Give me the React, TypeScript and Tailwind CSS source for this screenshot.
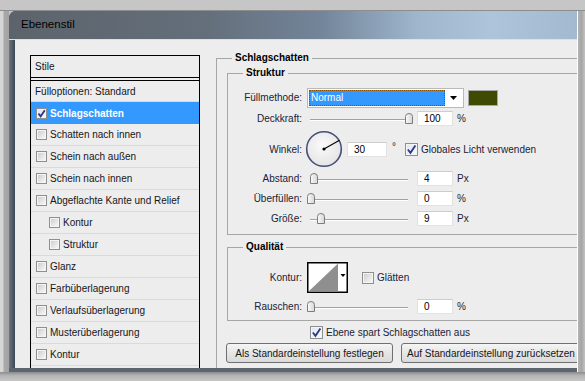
import React from "react";

type BoxProps = { checked?: boolean; size?: number };

function CheckBox({ checked = false, size = 11 }: BoxProps) {
  const s = size;
  return (
    <svg width={s} height={s} viewBox={`0 0 ${s} ${s}`} className="shrink-0">
      <defs>
        <linearGradient id="cbOff" x1="0" y1="0" x2="1" y2="1">
          <stop offset="0" stopColor="#cfcfcf" />
          <stop offset="1" stopColor="#f6f6f6" />
        </linearGradient>
        <linearGradient id="cbOn" x1="0" y1="0" x2="1" y2="1">
          <stop offset="0" stopColor="#dfe6f5" />
          <stop offset="1" stopColor="#f8f9fd" />
        </linearGradient>
      </defs>
      <rect x={0.5} y={0.5} width={s - 1} height={s - 1} fill="#f4f4f4" stroke="#8e8f8f" />
      <rect x={2} y={2} width={s - 4} height={s - 4} fill={checked ? "url(#cbOn)" : "url(#cbOff)"} />
      {checked && (
        <path
          d={`M${s * 0.22} ${s * 0.5} L${s * 0.42} ${s * 0.76} L${s * 0.8} ${s * 0.2}`}
          stroke="#2b3a86"
          strokeWidth={1.8}
          fill="none"
        />
      )}
    </svg>
  );
}

function Thumb() {
  return (
    <svg width={8} height={11} viewBox="0 0 8 11">
      <defs>
        <linearGradient id="thumbG" x1="0" y1="0" x2="1" y2="0">
          <stop offset="0" stopColor="#fbfbfb" />
          <stop offset="1" stopColor="#d6d6d6" />
        </linearGradient>
      </defs>
      <path d="M0.5 3.5 Q0.5 0.5 4 0.5 Q7.5 0.5 7.5 3.5 V10.5 H0.5 Z" fill="url(#thumbG)" stroke="#7c7c7c" />
    </svg>
  );
}

// thumb offset in px from the start of the slider box
function Slider({ at }: { at: number }) {
  return (
    <div className="relative h-[16px] w-[105px] shrink-0">
      <div className="absolute left-[3px] top-[9px] h-[2px] w-[98px] border-t border-t-[#a2a2a2] border-b border-b-white" />
      <div className="absolute top-[3px] leading-none" style={{ left: at }}>
        <Thumb />
      </div>
    </div>
  );
}

function NumBox({ value, w = 36 }: { value: string; w?: number }) {
  return (
    <div
      className="flex h-[15px] shrink-0 items-center border border-[#e2e2e2] border-t-[#cdcdcd] bg-white pl-[6px] text-black"
      style={{ width: w }}
    >
      {value}
    </div>
  );
}

function Row({
  label,
  className = "",
  children,
}: {
  label: string;
  className?: string;
  children: React.ReactNode;
}) {
  return (
    <div className={`flex items-center ${className}`}>
      <span className="w-[74px] shrink-0 text-right text-[#1b2236]">{label}</span>
      {children}
    </div>
  );
}

function SliderRow({ label, at, value, unit, className = "" }: { label: string; at: number; value: string; unit: string; className?: string }) {
  return (
    <Row label={label} className={`h-[16px] ${className}`}>
      <div className="ml-[5px] flex items-center">
        <Slider at={at} />
        <div className="ml-[5px]">
          <NumBox value={value} />
        </div>
        <span className="ml-[4px] text-[#1b2236]">{unit}</span>
      </div>
    </Row>
  );
}

const styles: { label: string; indent?: boolean }[] = [
  { label: "Schatten nach innen" },
  { label: "Schein nach außen" },
  { label: "Schein nach innen" },
  { label: "Abgeflachte Kante und Relief" },
  { label: "Kontur", indent: true },
  { label: "Struktur", indent: true },
  { label: "Glanz" },
  { label: "Farbüberlagerung" },
  { label: "Verlaufsüberlagerung" },
  { label: "Musterüberlagerung" },
  { label: "Kontur" },
  { label: "" },
];

export default function App() {
  return (
    <div className="flex h-[381px] w-[585px] flex-col overflow-hidden bg-[#c4c4c4] font-['Liberation_Sans',Arial,sans-serif] text-[10px] text-[#16161a]">
      {/* outer grey frame, top */}
      <div className="h-[11px] shrink-0 border-b border-b-[#8d8d8d] bg-[#c6c6c6]" />

      <div className="flex min-h-0 flex-1">
        <div className="w-[9px] shrink-0 bg-[linear-gradient(90deg,#d6d6d6_0px,#d6d6d6_3px,#a9a9a9_4px,#a3a3a3_9px)]" />

        {/* dialog window */}
        <div className="flex min-w-0 flex-1 flex-col overflow-hidden rounded-tl-[7px] bg-[#3f4953]">
          <div className="flex h-[29px] shrink-0 items-center border-b border-b-[#d5e2ee] bg-[linear-gradient(90deg,#5c636b_0%,#646f7b_35%,#73859a_55%,#9fb6cd_72%,#aec4da_85%,#a3b9cf_100%)] pl-[12px]">
            <span className="text-[11.5px] text-black">Ebenenstil</span>
          </div>

          <div className="flex min-h-0 flex-1">
            <div className="w-[6px] shrink-0 bg-[linear-gradient(90deg,#6d7781,#3c4650)]" />

            <div className="flex min-w-0 flex-1 items-start overflow-hidden bg-[#ededed]">
              {/* styles list */}
              <div className="ml-[15px] mt-[15px] w-[170px] shrink-0 border-x border-t border-black bg-[#ededed]">
                <div className="flex h-[22px] items-center border-b border-black pl-[4px]">Stile</div>
                <div className="h-[2px]" />
                <div className="border-t border-black">
                  <div className="flex h-[21px] items-center border-b border-b-[#dadada] pl-[4px]">
                    Fülloptionen: Standard
                  </div>
                  <div className="flex h-[22px] items-center gap-[3px] bg-[#3399ff] pl-[5px] font-bold text-white">
                    <CheckBox checked />
                    <span>Schlagschatten</span>
                  </div>
                  {styles.map((s, i) => (
                    <div
                      key={i}
                      className={`flex h-[22px] items-center gap-[3px] border-b border-b-[#dadada] ${s.indent ? "pl-[18px]" : "pl-[5px]"}`}
                    >
                      <CheckBox />
                      <span>{s.label}</span>
                    </div>
                  ))}
                </div>
              </div>

              {/* settings */}
              <fieldset className="ml-[16px] mt-[12px] w-[400px] shrink-0 border border-[#a6a6a6] pb-[30px] pl-[10px]">
                <legend className="ml-[5px] px-[3px] text-[10px] font-bold leading-[12px] text-black">Schlagschatten</legend>

                <fieldset className="mt-[3px] w-[370px] border border-[#a6a6a6] pb-[8px]">
                  <legend className="ml-[15px] px-[3px] font-bold leading-[12px] text-black">Struktur</legend>

                  <Row label="Füllmethode:" className="mt-[8px] h-[21px]">
                    <div className="ml-[5px] flex h-[20px] w-[157px] items-stretch border border-[#b9b9b9] bg-white p-[1px]">
                      <div className="flex w-[136px] items-center border border-dotted border-[#8a4d00] bg-[#3399ff] pl-[1px] text-white">
                        Normal
                      </div>
                      <div className="flex flex-1 items-center justify-center">
                        <svg width={7} height={4} viewBox="0 0 7 4">
                          <polygon points="0,0 7,0 3.5,4" fill="#000" />
                        </svg>
                      </div>
                    </div>
                    <div className="ml-[4px] h-[16px] w-[30px] border border-[#a9a9a9] bg-[#3f4a02]" />
                  </Row>

                  <SliderRow label="Deckkraft:" at={98} value="100" unit="%" className="mt-[2px]" />

                  <Row label="Winkel:" className="mt-[4px] h-[38px]">
                    <svg width={38} height={38} viewBox="0 0 38 38" className="ml-[3px] shrink-0">
                      <defs>
                        <radialGradient id="dialG" cx="45%" cy="40%" r="65%">
                          <stop offset="0" stopColor="#fbfbfb" />
                          <stop offset="1" stopColor="#e2e2e2" />
                        </radialGradient>
                      </defs>
                      <circle cx={19} cy={19} r={17.3} fill="url(#dialG)" stroke="#45507a" strokeWidth={1.6} />
                      <line x1={19} y1={19} x2={34.5} y2={10.3} stroke="#000" strokeWidth={1.1} />
                      <circle cx={19} cy={19} r={1.6} fill="#000" />
                    </svg>
                    <div className="ml-[4px]">
                      <NumBox value="30" w={40} />
                    </div>
                    <span className="mb-[6px] ml-[5px] text-[#1b2236]">°</span>
                    <div className="ml-[9px] flex items-center gap-[3px]">
                      <CheckBox checked size={13} />
                      <span className="text-[#1b2236]">Globales Licht verwenden</span>
                    </div>
                  </Row>

                  <SliderRow label="Abstand:" at={3} value="4" unit="Px" className="mt-[2px]" />
                  <SliderRow label="Überfüllen:" at={0} value="0" unit="%" className="mt-[4px]" />
                  <SliderRow label="Größe:" at={10} value="9" unit="Px" className="mt-[4px]" />
                </fieldset>

                <fieldset className="mt-[6px] w-[370px] border border-[#a6a6a6] pb-[6px]">
                  <legend className="ml-[15px] px-[3px] font-bold leading-[12px] text-black">Qualität</legend>

                  <Row label="Kontur:" className="mt-[9px] h-[31px]">
                    <svg width={41} height={31} viewBox="0 0 41 31" className="ml-[5px] shrink-0">
                      <rect x={0.75} y={0.75} width={39.5} height={29.5} fill="#fff" stroke="#000" strokeWidth={1.5} />
                      <polygon points="1.5,29.5 31,1.5 31,29.5" fill="#8f8f8f" />
                      <polygon points="33.5,12 38.5,12 36,15" fill="#000" />
                    </svg>
                    <div className="ml-[14px] flex items-center gap-[3px]">
                      <CheckBox size={12} />
                      <span className="text-[#1b2236]">Glätten</span>
                    </div>
                  </Row>

                  <SliderRow label="Rauschen:" at={0} value="0" unit="%" className="mt-[5px]" />
                </fieldset>

                <div className="ml-[83px] mt-[5px] flex h-[13px] items-center gap-[3px]">
                  <CheckBox checked size={13} />
                  <span className="text-[#1b2236]">Ebene spart Schlagschatten aus</span>
                </div>

                <div className="-ml-[1px] mt-[4px] flex gap-[8px]">
                  <button className="h-[20px] w-[167px] shrink-0 rounded-[3px] border border-[#707070] bg-[linear-gradient(180deg,#f5f5f5,#e6e6e6_50%,#d9d9d9)] text-[10px] text-[#16161a]">
                    Als Standardeinstellung festlegen
                  </button>
                  <button className="h-[20px] w-[200px] shrink-0 rounded-[3px] border border-[#707070] bg-[linear-gradient(180deg,#f5f5f5,#e6e6e6_50%,#d9d9d9)] pl-[5px] text-left text-[10px] text-[#16161a]">
                    Auf Standardeinstellung zurücksetzen
                  </button>
                </div>
              </fieldset>
            </div>
          </div>

          <div className="h-[4px] shrink-0 bg-[#5d666f]" />
        </div>

        <div className="w-[8px] shrink-0 border-l border-l-white bg-[linear-gradient(90deg,#b3b3b3,#a6a6a6_50%,#c2c2c2)]" />
      </div>

      <div className="h-[9px] shrink-0 bg-[linear-gradient(180deg,#8c8c8c,#b4b4b4_40%,#c6c6c6)]" />
    </div>
  );
}
